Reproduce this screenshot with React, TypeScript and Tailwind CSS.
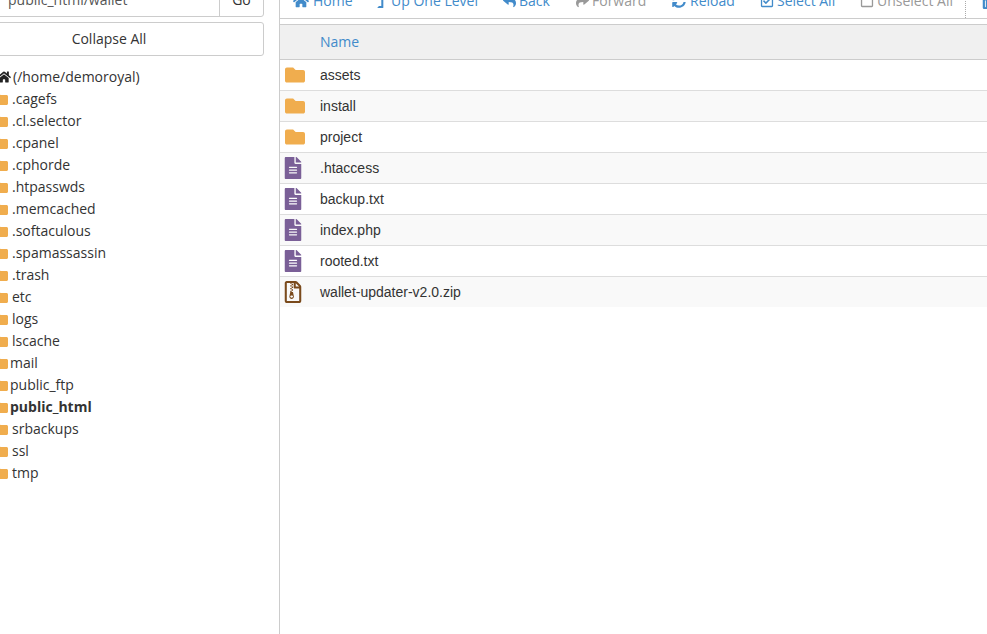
import { FaFolder, FaFileAlt, FaRegFileArchive, FaHome, FaLevelUpAlt, FaReply, FaShare, FaSyncAlt, FaRegCheckSquare, FaRegSquare, FaTrashAlt } from "react-icons/fa";

const TREE = [
  { name: ".cagefs", gap: "ml-[4px]" },
  { name: ".cl.selector", gap: "ml-[4px]" },
  { name: ".cpanel", gap: "ml-[4px]" },
  { name: ".cphorde", gap: "ml-[4px]" },
  { name: ".htpasswds", gap: "ml-[4px]" },
  { name: ".memcached", gap: "ml-[4px]" },
  { name: ".softaculous", gap: "ml-[4px]" },
  { name: ".spamassassin", gap: "ml-[4px]" },
  { name: ".trash", gap: "ml-[4px]" },
  { name: "etc", gap: "ml-[4px]" },
  { name: "logs", gap: "ml-[4px]" },
  { name: "lscache", gap: "ml-[4px]" },
  { name: "mail", gap: "ml-[2px]" },
  { name: "public_ftp", gap: "ml-[2px]" },
  { name: "public_html", gap: "ml-[2px] font-bold" },
  { name: "srbackups", gap: "ml-[4px]" },
  { name: "ssl", gap: "ml-[4px]" },
  { name: "tmp", gap: "ml-[4px]" },
];

const FILES = [
  { name: "assets", kind: "folder" },
  { name: "install", kind: "folder" },
  { name: "project", kind: "folder" },
  { name: ".htaccess", kind: "file" },
  { name: "backup.txt", kind: "file" },
  { name: "index.php", kind: "file" },
  { name: "rooted.txt", kind: "file" },
  { name: "wallet-updater-v2.0.zip", kind: "zip" },
];

function FileIcon({ kind }: { kind: string }) {
  if (kind === "folder") return <FaFolder size={20} className="text-[#f0ad4e]" />;
  if (kind === "zip") return <FaRegFileArchive size={22} className="-ml-[3px] text-[#7a4a1c]" />;
  return <FaFileAlt size={22} className="-ml-[3px] text-[#7a5f97]" />;
}

function ToolItem({ icon, label, width, gap, muted }: { icon: React.ReactNode; label: string; width: string; gap: string; muted?: boolean }) {
  return (
    <div className={`flex shrink-0 items-center ${width} ${muted ? "text-[#999999]" : "text-[#428bca]"}`}>
      {icon}
      <span className={`${gap} text-sm leading-5`}>{label}</span>
    </div>
  );
}

export default function App() {
  return (
    <div className="flex h-[634px] w-[987px] overflow-hidden bg-white text-[#333333] font-['Open_Sans',sans-serif]">
      <aside className="w-[280px] shrink-0 border-r border-[#cccccc]">
        <div className="-mt-[17px] -ml-[46px] mr-[15px] flex h-[34px] rounded-[3px] border border-[#cccccc]">
          <div className="flex-1 pl-[53px] text-sm leading-[32px] text-[#555555]">public_html/wallet</div>
          <div className="w-[44px] border-l border-[#cccccc] text-center text-sm leading-[32px]">Go</div>
        </div>
        <div className="-ml-[46px] mr-[15px] mt-[5px] h-[34px] rounded-[3px] border border-[#cccccc] text-center text-sm leading-[32px]">
          Collapse All
        </div>
        <div className="mt-[10px] text-sm leading-[22px]">
          <div className="flex items-center">
            <FaHome size={14} className="-ml-[3px] text-[#222222]" />
            <span className="ml-[2px]">(/home/demoroyal)</span>
          </div>
          {TREE.map((t) => (
            <div key={t.name} className="flex items-center">
              <FaFolder size={16} className="-ml-[8px] shrink-0 text-[#f0ad4e]" />
              <span className={t.gap}>{t.name}</span>
            </div>
          ))}
        </div>
      </aside>
      <main className="-ml-px min-w-0 flex-1">
        <div className="-mt-[14px] flex h-[33px] items-center border-b border-l border-[#cccccc] pb-[2px] pl-[13px]">
          <ToolItem icon={<FaHome size={16} />} label="Home" width="w-[85px]" gap="ml-[4px]" />
          <ToolItem icon={<FaLevelUpAlt size={13} className="-ml-[3px]" />} label="Up One Level" width="w-[125px]" gap="ml-[3px]" />
          <ToolItem icon={<FaReply size={13} />} label="Back" width="w-[73px]" gap="ml-[3px]" />
          <ToolItem icon={<FaShare size={13} />} label="Forward" width="w-[96px]" gap="ml-[3px]" muted />
          <ToolItem icon={<FaSyncAlt size={14} />} label="Reload" width="w-[88px]" gap="ml-[4px]" />
          <ToolItem icon={<FaRegCheckSquare size={14} />} label="Select All" width="w-[100px]" gap="ml-[3px]" />
          <ToolItem icon={<FaRegSquare size={14} />} label="Unselect All" width="w-[105px]" gap="ml-[3px]" muted />
          <div className="-mb-[2px] flex shrink-0 items-center self-stretch border-l border-dotted border-[#aaaaaa] pl-[15px] text-[#428bca]">
            <FaTrashAlt size={14} className="shrink-0" />
          </div>
        </div>
        <div className="mt-[5px] border-l border-t border-[#cccccc] font-['Liberation_Sans',sans-serif] text-sm">
          <div className="flex h-[35px] items-center border-b border-[#cccccc] bg-[#f0f0f0] pl-[40px] font-['Open_Sans',sans-serif] text-[#428bca]">
            Name
          </div>
          {FILES.map((f, i) => (
            <div
              key={f.name}
              className={`flex items-center pl-[5px] ${i < FILES.length - 1 ? "h-[31px] border-b border-[#dddddd]" : "h-[30px]"} ${i % 2 === 1 ? "bg-[#f9f9f9]" : "bg-white"}`}
            >
              <span className="flex w-[35px] shrink-0">
                <FileIcon kind={f.kind} />
              </span>
              <span>{f.name}</span>
            </div>
          ))}
        </div>
      </main>
    </div>
  );
}
